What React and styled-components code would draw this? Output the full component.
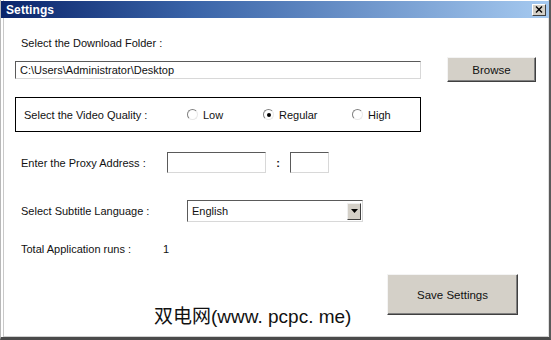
import React from "react"
import styled, { createGlobalStyle } from "styled-components"

const Global = createGlobalStyle`
  html, body { margin: 0; padding: 0; background: #fff; }
  body { font-family: "Liberation Sans", Arial, sans-serif; }
`

const Window = styled.div`
  position: relative;
  width: 551px;
  height: 340px;
  box-sizing: border-box;
  background: #fff;
  border-left: 1px solid #b8b8b8;
  border-right: 2px solid #5a5a5a;
  border-bottom: 3px solid #4a4a4a;
  box-shadow: inset 2px 0 0 #fff, inset 3px 0 0 #c8c8c8, inset -1px 0 0 #e0e0e0,
    inset 0 -1px 0 #d0d0d0;
  overflow: hidden;
  font-size: 11px;
  color: #111;
`

const TitleBar = styled.div`
  display: flex;
  align-items: center;
  justify-content: space-between;
  height: 17px;
  margin-top: 1px;
  padding: 0 3px 0 5px;
  background: linear-gradient(to right, #0a246a 0%, #3a64a8 35%, #a6caf0 100%);
`

const Title = styled.span`
  color: #fff;
  font-weight: bold;
  font-size: 12px;
  letter-spacing: 0.1px;
`

const CloseButton = styled.div`
  width: 12px;
  height: 10px;
  background: #d4d0c8;
  border: 1px solid;
  border-color: #fff #404040 #404040 #fff;
  display: flex;
  align-items: center;
  justify-content: center;
`

const Body = styled.div`
  display: flex;
  flex-direction: column;
  padding: 0 0 0 14px;
`

const Label = styled.div`
  width: ${p => p.$width || "auto"};
  flex-shrink: 0;
  line-height: 14px;
  margin-left: ${p => p.$indent || "0"};
`

const TopLabel = styled(Label)`
  margin-top: 18px;
  margin-left: 6px;
`

const Row = styled.div`
  display: flex;
  align-items: center;
  height: ${p => p.$height || "auto"};
  margin-top: ${p => p.$top || "0"};
`

const TextBox = styled.div`
  box-sizing: border-box;
  width: ${p => p.$width};
  height: ${p => p.$height || "18px"};
  border: 1px solid;
  border-color: #5a5a5a #d8d8d8 #d8d8d8 #5a5a5a;
  background: #fff;
  padding: 0 4px;
  display: flex;
  align-items: center;
  line-height: 14px;
`

const Button = styled.div`
  box-sizing: border-box;
  width: ${p => p.$width};
  height: ${p => p.$height};
  margin-left: ${p => p.$left || "0"};
  background: #d4d0c8;
  border: 1px solid;
  border-color: #f4f4f4 #404040 #404040 #f4f4f4;
  box-shadow: inset -1px -1px 0 #808080;
  display: flex;
  align-items: center;
  justify-content: center;
  font-size: 11.5px;
`

const GroupBox = styled.div`
  box-sizing: border-box;
  width: 406px;
  height: 35px;
  margin-top: 15px;
  border: 1px solid #000;
  display: flex;
  align-items: center;
  padding-left: 8px;
`

const RadioOption = styled.div`
  display: flex;
  align-items: center;
  gap: 5px;
  width: ${p => p.$width || "auto"};
`

const RadioCircle = styled.span`
  box-sizing: border-box;
  width: 11px;
  height: 11px;
  border-radius: 50%;
  border: 1px solid;
  border-color: #808080 #e8e8e8 #e8e8e8 #808080;
  background: #fff;
  display: flex;
  align-items: center;
  justify-content: center;
  &::after {
    content: "";
    display: ${p => (p.$checked ? "block" : "none")};
    width: 4px;
    height: 4px;
    border-radius: 50%;
    background: #000;
  }
`

const Colon = styled.span`
  width: 24px;
  text-align: center;
  font-weight: bold;
`

const Select = styled(TextBox)`
  padding: 0 1px 0 4px;
  justify-content: space-between;
`

const DropButton = styled.div`
  box-sizing: border-box;
  width: 14px;
  height: 17px;
  background: #d4d0c8;
  border: 1px solid;
  border-color: #f0f0f0 #404040 #404040 #f0f0f0;
  display: flex;
  align-items: center;
  justify-content: center;
`

const Footer = styled.div`
  display: flex;
  justify-content: flex-end;
  padding-right: 31px;
  margin-top: 18px;
`

const Watermark = styled.div`
  position: absolute;
  left: 153px;
  top: 304px;
  font-family: "Liberation Sans", "Noto Sans CJK SC", sans-serif;
  font-size: 19px;
  line-height: 26px;
  color: #111;
  text-shadow: 0 0 2px #fff, 0 0 2px #fff;
`

const Radio = ({ label, checked, width }) => (
  <RadioOption $width={width}>
    <RadioCircle $checked={checked} />
    <span>{label}</span>
  </RadioOption>
)

export default function App() {
  return (
    <>
      <Global />
      <Window>
        <TitleBar>
          <Title>Settings</Title>
          <CloseButton>
            <svg width="8" height="7" viewBox="0 0 8 7">
              <path d="M1 0.5 L7 6.5 M7 0.5 L1 6.5" stroke="#000" strokeWidth="1.4" />
            </svg>
          </CloseButton>
        </TitleBar>
        <Body>
          <TopLabel>Select the Download Folder :</TopLabel>
          <Row $height="25px" $top="7px">
            <TextBox $width="406px">C:\Users\Administrator\Desktop</TextBox>
            <Button $width="89px" $height="25px" $left="26px">
              Browse
            </Button>
          </Row>
          <GroupBox>
            <Label $width="163px">Select the Video Quality :</Label>
            <Radio label="Low" width="76px" />
            <Radio label="Regular" width="89px" checked />
            <Radio label="High" />
          </GroupBox>
          <Row $height="21px" $top="20px">
            <Label $width="146px" $indent="6px">Enter the Proxy Address :</Label>
            <TextBox $width="99px" $height="21px" />
            <Colon>:</Colon>
            <TextBox $width="39px" $height="21px" />
          </Row>
          <Row $height="22px" $top="27px">
            <Label $width="166px" $indent="6px">Select Subtitle Language :</Label>
            <Select $width="176px" $height="22px">
              <span>English</span>
              <DropButton>
                <svg width="7" height="4" viewBox="0 0 7 4">
                  <path d="M0 0 H7 L3.5 4 Z" fill="#000" />
                </svg>
              </DropButton>
            </Select>
          </Row>
          <Row $height="14px" $top="20px">
            <Label $width="142px" $indent="6px">Total Application runs :</Label>
            <span>1</span>
          </Row>
          <Footer>
            <Button $width="131px" $height="41px">
              Save Settings
            </Button>
          </Footer>
        </Body>
        <Watermark>双电网(www. pcpc. me)</Watermark>
      </Window>
    </>
  )
}
